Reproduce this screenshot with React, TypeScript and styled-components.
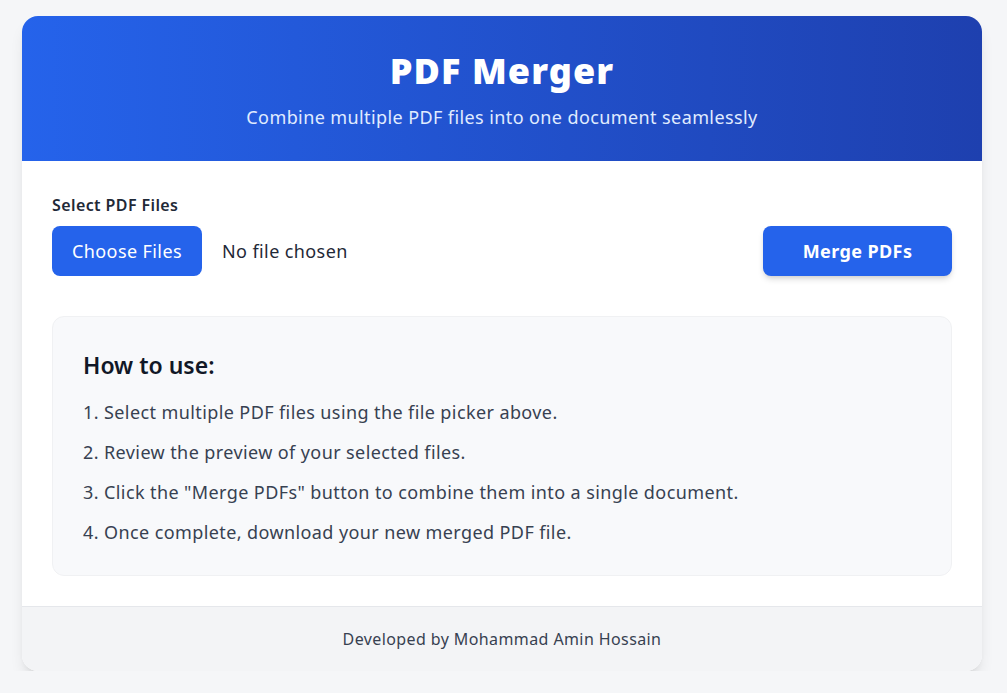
import styled, { createGlobalStyle } from 'styled-components';

const GlobalStyle = createGlobalStyle`
  body {
    margin: 0;
    background: #f5f6f8;
    font-family: "Noto Sans", "Open Sans", sans-serif;
    letter-spacing: 0.025em;
    color: #1f2937;
  }
`;

const SCard = styled.div`
  width: 960px;
  margin: 16px 0 0 22px;
  background: #ffffff;
  border-radius: 16px;
  overflow: hidden;
  box-shadow: 0 10px 15px -3px rgba(0, 0, 0, 0.1), 0 4px 6px -4px rgba(0, 0, 0, 0.1);
`;

const SHeader = styled.header`
  height: 145px;
  box-sizing: border-box;
  padding-top: 33px;
  text-align: center;
  color: #ffffff;
  background: linear-gradient(to right, #2563eb, #1e40af);
  h1 {
    margin: 0 0 10px;
    font-size: 36px;
    line-height: 44px;
    font-weight: 900;
    letter-spacing: 0.03em;
  }
`;

const SSubtitle = styled.p`
  margin: 0;
  font-size: 18px;
  line-height: 28px;
  color: #e0ecff;
`;

const SBody = styled.main`
  padding: 32px 30px 30px;
`;

const SLabel = styled.label`
  display: block;
  font-size: 16px;
  line-height: 24px;
  font-weight: 600;
  color: #1f2937;
  margin-bottom: 9px;
`;

const SRow = styled.div`
  display: flex;
  align-items: center;
  justify-content: space-between;
  margin-bottom: 40px;
`;

const SPicker = styled.div`
  display: flex;
  align-items: center;
  gap: 20px;
  font-size: 18px;
  color: #1f2937;
`;

const SButton = styled.button<{ $bold?: boolean }>`
  height: 50px;
  width: 150px;
  padding: 0;
  border: none;
  border-radius: 8px;
  background: #2563eb;
  color: #ffffff;
  font-family: inherit;
  letter-spacing: inherit;
  font-size: 18px;
  font-weight: ${(p) => (p.$bold ? 700 : 400)};
  cursor: pointer;
`;

const SMergeButton = styled(SButton)`
  width: 189px;
  box-shadow: 0 4px 6px -1px rgba(0, 0, 0, 0.15), 0 2px 4px -2px rgba(0, 0, 0, 0.1);
`;

const SInfo = styled.section`
  background: #f8f9fb;
  border: 1px solid #f0f1f3;
  border-radius: 12px;
  padding: 32px 30px 29px;
  h2 {
    margin: 0 0 17px;
    font-size: 23px;
    line-height: 32px;
    font-weight: 600;
    letter-spacing: 0;
    color: #111827;
  }
  ol {
    margin: 0;
    padding: 0;
    list-style: none;
  }
  li {
    font-size: 18px;
    line-height: 28px;
    color: #374151;
    margin-bottom: 12px;
  }
  li:last-child {
    margin-bottom: 0;
  }
`;

const SFooter = styled.footer`
  background: #f3f4f6;
  border-top: 1px solid #e5e7eb;
  padding: 20px 0 20px;
  text-align: center;
  font-size: 16px;
  line-height: 24px;
  color: #374151;
`;

const steps = [
  'Select multiple PDF files using the file picker above.',
  'Review the preview of your selected files.',
  'Click the "Merge PDFs" button to combine them into a single document.',
  'Once complete, download your new merged PDF file.',
];

export default function App() {
  return (
    <>
      <GlobalStyle />
      <SCard>
        <SHeader>
          <h1>PDF Merger</h1>
          <SSubtitle>Combine multiple PDF files into one document seamlessly</SSubtitle>
        </SHeader>
        <SBody>
          <SLabel>Select PDF Files</SLabel>
          <SRow>
            <SPicker>
              <SButton>Choose Files</SButton>
              <span>No file chosen</span>
            </SPicker>
            <SMergeButton $bold>Merge PDFs</SMergeButton>
          </SRow>
          <SInfo>
            <h2>How to use:</h2>
            <ol>
              {steps.map((s, i) => (
                <li key={i}>
                  {i + 1}. {s}
                </li>
              ))}
            </ol>
          </SInfo>
        </SBody>
        <SFooter>Developed by Mohammad Amin Hossain</SFooter>
      </SCard>
    </>
  );
}
